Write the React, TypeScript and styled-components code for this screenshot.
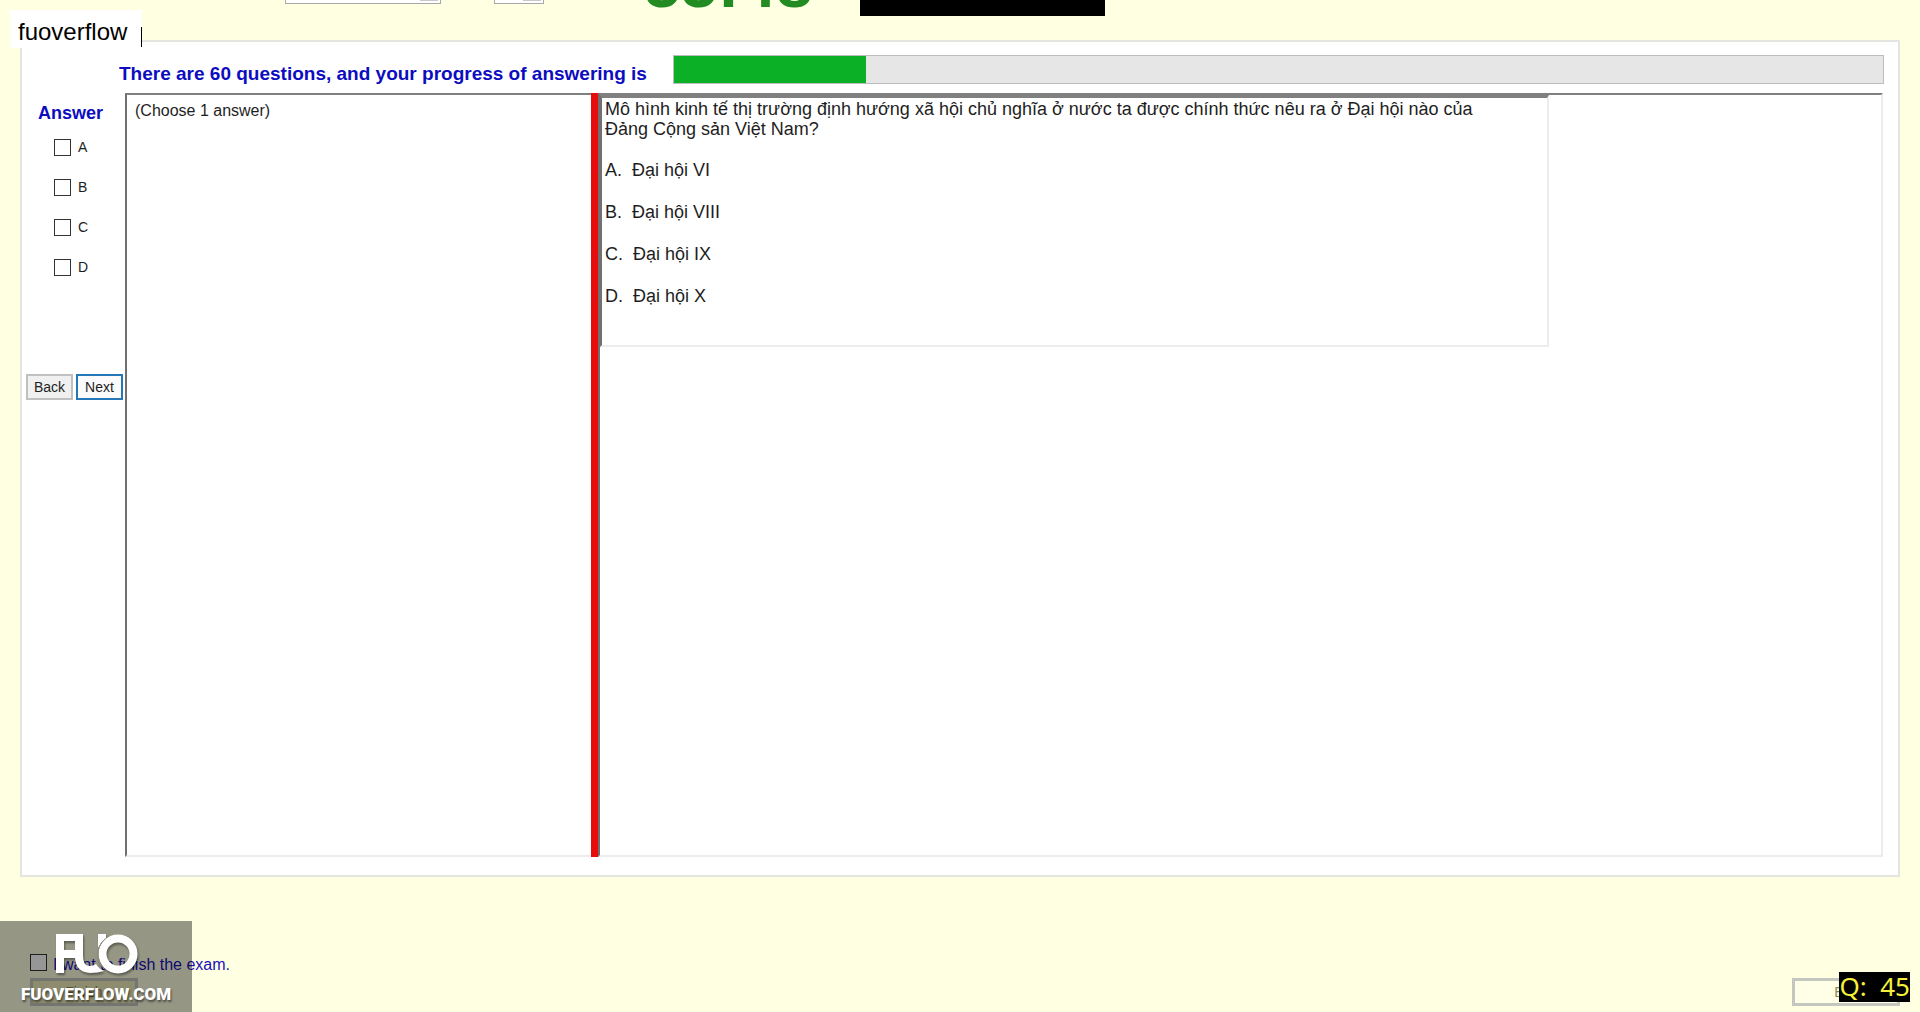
import React from "react";
import styled, { createGlobalStyle } from "styled-components";

const Global = createGlobalStyle`
  * { box-sizing: border-box; }
  html, body, #root { height: 100%; }
  body {
    margin: 0;
    background: #ffffe1;
    color: #1e1e1e;
    font-family: "Liberation Sans", Arial, sans-serif;
    overflow: hidden;
  }
`;

const Page = styled.div`
  position: relative;
  display: flex;
  flex-direction: column;
  height: 100vh;
  overflow: hidden;
`;

const TopBar = styled.header`
  display: flex;
  align-items: flex-end;
  height: 40px;
  padding: 0 0 24px 285px;
`;

const Combo = styled.select<{ $width: number; $gap: number }>`
  width: ${(p) => p.$width}px;
  height: 24px;
  margin: 0 ${(p) => p.$gap}px 12px 0;
  background: linear-gradient(#c8c8cc, #c8c8cc) right 2px bottom 2px / 18px 20px no-repeat #fff;
  border: 1px solid #a8a8a8;
  border-radius: 0;
  appearance: none;
`;

const Timer = styled.time`
  width: 216px;
  font-size: 66px;
  line-height: 64px;
  font-weight: 700;
  color: #228b22;
`;

const BlackBlock = styled.div`
  width: 245px;
  height: 32px;
  background: #000;
`;

const Panel = styled.main`
  flex: 1;
  display: flex;
  flex-direction: column;
  min-height: 0;
  margin: 0 20px;
  padding: 13px 14px 18px 4px;
  background: #fff;
  border: 2px solid #e2e5e0;
`;

const ProgressRow = styled.div`
  display: flex;
  align-items: center;
  height: 29px;
  padding-left: 93px;
`;

const ProgressLabel = styled.label`
  flex: 0 0 554px;
  padding-top: 9px;
  font-size: 19px;
  line-height: 20px;
  font-weight: 700;
  color: #0c0cc0;
  white-space: nowrap;
`;

const Progress = styled.progress`
  flex: 1;
  min-width: 0;
  height: 29px;
  appearance: none;
  background: #e6e6e6;
  border: 1px solid #bcbcbc;
  &::-webkit-progress-bar { background: #e6e6e6; }
  &::-webkit-progress-value { background: #0bb027; }
`;

const Body = styled.div`
  flex: 1;
  display: flex;
  min-height: 0;
  padding: 9px 1px 0 0;
`;

const AnswerColumn = styled.aside`
  flex: 0 0 99px;
  padding-top: 10px;
`;

const AnswerTitle = styled.h2`
  margin: 0 0 16px 12px;
  font-size: 18px;
  line-height: 20px;
  font-weight: 700;
  color: #0c0cc0;
`;

const CheckLabel = styled.label`
  display: flex;
  align-items: center;
  gap: 7px;
  height: 16px;
  margin: 0 0 24px 28px;
  font-size: 14px;
  line-height: 16px;
`;

const Check = styled.input`
  appearance: none;
  flex: none;
  width: 17px;
  height: 17px;
  margin: 0;
  background: #fff;
  border: 1px solid #333;
`;

const Buttons = styled.div`
  display: flex;
  gap: 3px;
  padding-top: 75px;
`;

const NavButton = styled.button<{ $active?: boolean }>`
  width: 47px;
  height: 26px;
  padding: 0;
  font: 14px "Liberation Sans", Arial, sans-serif;
  color: #1e1e1e;
  background: ${(p) => (p.$active ? "#fbfbfb" : "#f0f0f0")};
  border: 2px solid ${(p) => (p.$active ? "#2478b8" : "#c0c0c0")};
  border-radius: 0;
`;

const Sunken = styled.section`
  background: #fff;
  border: 2px solid;
  border-color: #808080 #ececec #ececec #707070;
`;

const Instructions = styled(Sunken)`
  flex: 0 0 466px;
  padding: 7px 8px;
  font-size: 16px;
  line-height: 18px;
  border-right: 0;
`;

const Splitter = styled.div`
  flex: 0 0 7px;
  background: #e60c0c;
`;

const QuestionPane = styled(Sunken)`
  flex: 1;
  min-width: 0;
`;

const QuestionBox = styled(Sunken)`
  width: 949px;
  max-width: 100%;
  height: 252px;
  padding: 1px 60px 0 3px;
  border-top-width: 3px;
  font-size: 18px;
  line-height: 20px;
`;

const QuestionText = styled.p`
  margin: 0 0 21px;
`;

const Choices = styled.ol`
  display: grid;
  gap: 22px;
  margin: 0;
  padding: 0;
  list-style: none;
`;

const Choice = styled.li`
  white-space: pre;
`;

const Footer = styled.footer`
  display: flex;
  justify-content: space-between;
  align-items: flex-end;
  height: 135px;
  padding: 0 20px 6px 30px;
`;

const FinishGroup = styled.div`
  display: grid;
  gap: 7px;
`;

const FinishLabel = styled.label`
  display: flex;
  align-items: center;
  gap: 6px;
  height: 17px;
  font-size: 16px;
  line-height: 16px;
  color: #1a10c0;
`;

const FinishText = styled.span`
  padding-top: 4px;
`;

const FooterButton = styled.button<{ $fill: string }>`
  width: 108px;
  height: 28px;
  padding: 0;
  font: 14px "Liberation Sans", Arial, sans-serif;
  color: #8a8a50;
  background: ${(p) => p.$fill};
  border: 3px solid #c6c6c0;
  border-radius: 0;
`;

const NameTag = styled.div`
  position: absolute;
  top: 10px;
  left: 10px;
  display: flex;
  align-items: flex-end;
  height: 38px;
  padding: 0 0 1px 8px;
  background: #fff;
  font-size: 24px;
  line-height: 28px;
  color: #000;
`;

const TagText = styled.span`
  padding: 0 14px 1px 0;
`;

const Caret = styled.span`
  width: 1px;
  height: 20px;
  background: #000;
`;

const Watermark = styled.div`
  position: absolute;
  left: 0;
  bottom: 0;
  display: flex;
  flex-direction: column;
  align-items: center;
  width: 192px;
  height: 91px;
  padding-top: 13px;
  background: rgba(0, 0, 0, 0.41);
  color: #fff;
`;

const Logo = styled.svg`
  display: block;
  filter: drop-shadow(1px 2px 1px rgba(0, 0, 0, 0.4));
`;

const Site = styled.span`
  padding-top: 9px;
  font-family: "Roboto", "Liberation Sans", sans-serif;
  font-size: 17px;
  line-height: 22px;
  font-weight: 900;
  text-shadow: 1px 2px 2px rgba(0, 0, 0, 0.5);
`;

const Counter = styled.div`
  position: absolute;
  right: 10px;
  bottom: 10px;
  height: 30px;
  background: #000;
  color: #f4f03c;
  font-family: "Noto Sans", sans-serif;
  font-size: 26px;
  line-height: 28px;
  white-space: pre;
`;

const answers = ["A", "B", "C", "D"];
const choices = ["A.  Đại hội VI", "B.  Đại hội VIII", "C.  Đại hội IX", "D.  Đại hội X"];

export default function App() {
  return (
    <Page>
      <Global />
      <TopBar>
        <Combo $width={156} $gap={53} aria-label="Font" />
        <Combo $width={50} $gap={100} aria-label="Size" />
        <Timer>55:48</Timer>
        <BlackBlock />
      </TopBar>
      <Panel>
        <ProgressRow>
          <ProgressLabel htmlFor="progress">
            There are 60 questions, and your progress of answering is
          </ProgressLabel>
          <Progress id="progress" max={1000} value={159} />
        </ProgressRow>
        <Body>
          <AnswerColumn>
            <AnswerTitle>Answer</AnswerTitle>
            {answers.map((a) => (
              <CheckLabel key={a}>
                <Check type="checkbox" />
                {a}
              </CheckLabel>
            ))}
            <Buttons>
              <NavButton type="button">Back</NavButton>
              <NavButton type="button" $active>Next</NavButton>
            </Buttons>
          </AnswerColumn>
          <Instructions>(Choose 1 answer)</Instructions>
          <Splitter />
          <QuestionPane>
            <QuestionBox>
              <QuestionText>
                Mô hình kinh tế thị trường định hướng xã hội chủ nghĩa ở nước ta được chính thức nêu ra ở Đại hội nào của Đảng Cộng sản Việt Nam?
              </QuestionText>
              <Choices>
                {choices.map((c) => (
                  <Choice key={c}>{c}</Choice>
                ))}
              </Choices>
            </QuestionBox>
          </QuestionPane>
        </Body>
      </Panel>
      <Footer>
        <FinishGroup>
          <FinishLabel>
            <Check type="checkbox" />
            <FinishText>I want to finish the exam.</FinishText>
          </FinishLabel>
          <FooterButton type="button" $fill="#f2eebb">Finish</FooterButton>
        </FinishGroup>
        <FooterButton type="button" $fill="#ffffe8">Exit</FooterButton>
      </Footer>
      <NameTag>
        <TagText>fuoverflow</TagText>
        <Caret />
      </NameTag>
      <Watermark>
        <Logo width="84" height="40" viewBox="-2 0 84 40" fill="none" aria-hidden="true">
          <path d="M0 0H27V22Q27 32 34 32Q37 32 40 30Q43 35 48 37Q42 39 34 39Q20 38 19 24H8V39H0ZM8 7V16H19V7Z" fill="#fff" fillRule="evenodd" />
          <path d="M42 0H50V4Q45 8 42 14Z" fill="#fff" />
          <circle cx="62" cy="20" r="15.5" stroke="#fff" strokeWidth="8" />
          <path d="M49 5Q41 12 42 22Q43 30 48 35" stroke="#8d8e80" strokeWidth="1" />
        </Logo>
        <Site>FUOVERFLOW.COM</Site>
      </Watermark>
      <Counter>Q:  45</Counter>
    </Page>
  );
}
